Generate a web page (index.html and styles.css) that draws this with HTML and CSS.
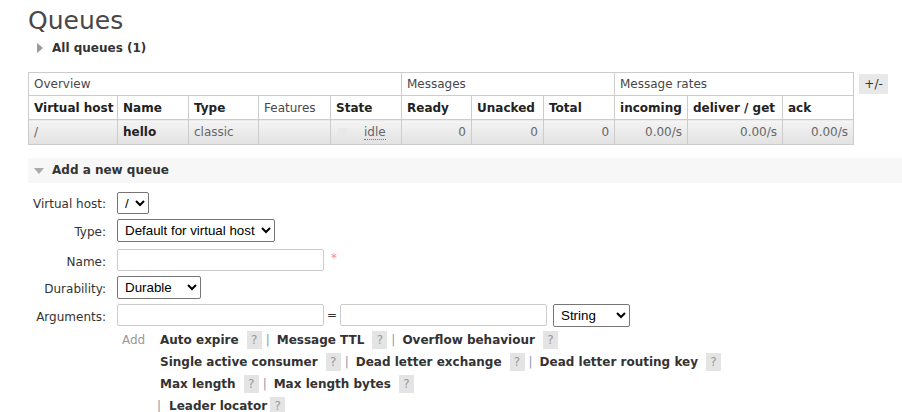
FILE: index.html
```html
<!DOCTYPE html>
<html>
<head>
<meta charset="utf-8">
<link rel="stylesheet" href="styles.css">
</head>
<body>
<div class="main">
  <h1 class="title">Queues</h1>
  <div class="toggle"><span class="tri-right"></span>All queues (1)</div>

  <div class="table-wrap">
    <table class="list">
      <colgroup>
        <col class="c-vhost"><col class="c-name"><col class="c-type"><col class="c-feat"><col class="c-state">
        <col class="c-ready"><col class="c-unacked"><col class="c-total">
        <col class="c-in"><col class="c-deliver"><col class="c-ack">
      </colgroup>
      <thead>
        <tr class="group">
          <th colspan="5">Overview</th>
          <th colspan="3">Messages</th>
          <th colspan="3">Message rates</th>
        </tr>
        <tr class="heads">
          <th>Virtual host</th>
          <th>Name</th>
          <th>Type</th>
          <th class="plain">Features</th>
          <th>State</th>
          <th>Ready</th>
          <th>Unacked</th>
          <th>Total</th>
          <th>incoming</th>
          <th>deliver / get</th>
          <th>ack</th>
        </tr>
      </thead>
      <tbody>
        <tr class="row">
          <td>/</td>
          <td class="qname">hello</td>
          <td>classic</td>
          <td></td>
          <td><span class="state-box"></span><abbr class="state">idle</abbr></td>
          <td class="num">0</td>
          <td class="num">0</td>
          <td class="num">0</td>
          <td class="num">0.00/s</td>
          <td class="num">0.00/s</td>
          <td class="num">0.00/s</td>
        </tr>
      </tbody>
    </table>
    <span class="plusminus">+/-</span>
  </div>

  <div class="section-bar"><span class="tri-down"></span>Add a new queue</div>

  <form class="form">
    <div class="frow r1">
      <label class="flabel">Virtual host:</label>
      <select class="sel w-vhost"><option>/</option></select>
    </div>
    <div class="frow r2">
      <label class="flabel">Type:</label>
      <select class="sel w-type"><option>Default for virtual host</option></select>
    </div>
    <div class="frow r3">
      <label class="flabel">Name:</label>
      <input class="txt" type="text">
      <span class="req">*</span>
    </div>
    <div class="frow r4">
      <label class="flabel">Durability:</label>
      <select class="sel w-dur"><option>Durable</option></select>
    </div>
    <div class="frow r5">
      <label class="flabel">Arguments:</label>
      <input class="txt" type="text">
      <span class="eq">=</span>
      <input class="txt" type="text">
      <select class="sel w-str"><option>String</option></select>
    </div>
    <div class="add-row">
      <span class="add-label">Add</span>
      <div class="add-links">
        <div class="aline"><span class="opt">Auto expire</span><span class="help">?</span><span class="sep">|</span><span class="opt">Message TTL</span><span class="help">?</span><span class="sep">|</span><span class="opt">Overflow behaviour</span><span class="help">?</span></div>
        <div class="aline"><span class="opt">Single active consumer</span><span class="help">?</span><span class="sep">|</span><span class="opt">Dead letter exchange</span><span class="help">?</span><span class="sep">|</span><span class="opt">Dead letter routing key</span><span class="help">?</span></div>
        <div class="aline"><span class="opt">Max length</span><span class="help">?</span><span class="sep">|</span><span class="opt">Max length bytes</span><span class="help">?</span></div>
        <div class="aline last"><span class="sep first">|</span><span class="opt">Leader locator</span><span class="help tight">?</span></div>
      </div>
    </div>
  </form>
</div>
</body>
</html>
```
FILE: styles.css
```css
html, body {
  margin: 0;
  padding: 0;
  background: #fff;
  overflow: hidden;
}
body {
  font-family: "DejaVu Sans", Verdana, sans-serif;
  font-size: 12px;
  color: #484848;
}
.main {
  padding-left: 28px;
}
.title {
  margin: 0;
  padding-top: 6px;
  font-size: 25px;
  line-height: 30px;
  font-weight: normal;
  color: #484848;
}
.toggle {
  margin-top: 2px;
  line-height: 20px;
  height: 20px;
  font-weight: bold;
  color: #333;
  display: flex;
  align-items: center;
}
.tri-right {
  display: inline-block;
  width: 0;
  height: 0;
  border-top: 5px solid transparent;
  border-bottom: 5px solid transparent;
  border-left: 6px solid #999;
  margin-left: 9px;
  margin-right: 9px;
}
.table-wrap {
  margin-top: 14px;
  display: flex;
  align-items: flex-start;
  gap: 5px;
}
.list {
  border-collapse: collapse;
  table-layout: fixed;
  width: 826px;
  border: 1px solid #ccc;
}
.c-vhost { width: 89px; }
.c-name { width: 71px; }
.c-type { width: 70px; }
.c-feat { width: 72px; }
.c-state { width: 71px; }
.c-ready { width: 70px; }
.c-unacked { width: 72px; }
.c-total { width: 71px; }
.c-in { width: 73px; }
.c-deliver { width: 95px; }
.c-ack { width: 71px; }
.list th, .list td {
  border: 1px solid #ccc;
  padding: 4px 5px;
  line-height: 14px;
  text-align: left;
  white-space: nowrap;
  overflow: hidden;
}
.list .group th {
  font-weight: normal;
  color: #484848;
}
.list .heads th {
  font-weight: bold;
  color: #222;
  padding-top: 5px;
}
.list .heads th.plain {
  font-weight: normal;
  color: #484848;
}
.list .row td {
  padding-top: 5px;
  padding-bottom: 5px;
  color: #666;
  background: linear-gradient(#f4f4f4, #e2e2e2);
}
.list .row td.qname {
  font-weight: bold;
  color: #222;
}
.list .row td.num {
  text-align: right;
}
.state-box {
  display: inline-block;
  width: 9px;
  height: 9px;
  background: #e8e8e8;
  margin-left: 2px;
  margin-right: 17px;
  vertical-align: -1px;
}
.state {
  text-decoration: none;
  border-bottom: 1px dotted #777;
  color: #666;
}
.plusminus {
  margin-top: 2px;
  width: 29px;
  height: 20px;
  line-height: 20px;
  text-align: center;
  background: #e8e8e8;
  color: #333;
}
.section-bar {
  margin-top: 13px;
  height: 25px;
  line-height: 25px;
  background: #f7f7f7;
  font-weight: bold;
  color: #333;
  display: flex;
  align-items: center;
}
.tri-down {
  display: inline-block;
  width: 0;
  height: 0;
  border-left: 5px solid transparent;
  border-right: 5px solid transparent;
  border-top: 6px solid #aaa;
  margin-left: 6px;
  margin-right: 8px;
}
.form {
  margin: 9px 0 0 0;
}
.frow {
  display: flex;
  align-items: center;
}
.r1 { height: 22px; margin-bottom: 5px; }
.r2 { height: 23px; margin-bottom: 7px; }
.r3 { height: 22px; margin-bottom: 5px; }
.r4 { height: 23px; margin-bottom: 5px; }
.r5 { height: 22px; margin-bottom: 3px; }
.flabel {
  width: 78px;
  text-align: right;
  margin-right: 11px;
  color: #333;
  padding-top: 3px;
}
.r1 .flabel, .r2 .flabel { padding-top: 2px; }
.sel {
  font-family: "Liberation Sans", Arial, sans-serif;
  font-size: 13.333px;
  height: 22px;
  box-sizing: border-box;
  border: 1px solid #767676;
  border-radius: 2px;
  background: #fff;
  color: #000;
  padding: 0 0 0 3px;
  margin: 0;
}
.r2 .sel, .r4 .sel { height: 23px; }
.w-vhost { width: 32px; }
.w-type { width: 158px; }
.w-dur { width: 84px; }
.w-str { width: 77px; height: 23px; margin-left: 6px; }
.txt {
  width: 207px;
  height: 22px;
  box-sizing: border-box;
  border: 1px solid #ccc;
  border-radius: 2px;
  margin: 0;
  padding: 0 2px;
}
.req {
  color: #f88;
  margin-left: 7px;
  align-self: flex-start;
  margin-top: 2px;
}
.eq {
  width: 16px;
  text-align: center;
  color: #333;
}
.add-row {
  display: flex;
  padding-left: 94px;
}
.add-label {
  color: #999;
  line-height: 22px;
  width: 38px;
}
.aline {
  height: 22px;
  display: flex;
  align-items: center;
  white-space: nowrap;
}
.opt {
  font-weight: bold;
  color: #333;
}
.help {
  display: inline-block;
  width: 15px;
  height: 18px;
  line-height: 18px;
  text-align: center;
  background: #e4e4e4;
  color: #999;
  margin-left: 8px;
}
.help.tight {
  margin-left: 3px;
}
.sep {
  color: #8a9ab0;
  margin-left: 4px;
  margin-right: 7px;
}
.sep.first {
  margin-left: -3px;
  margin-right: 8px;
}
```
